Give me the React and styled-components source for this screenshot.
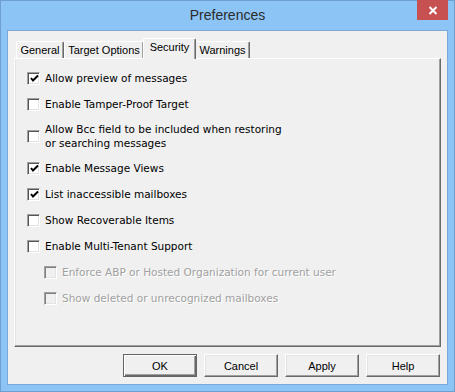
import styled, { createGlobalStyle } from 'styled-components'

const GlobalStyle = createGlobalStyle`
  html, body {
    margin: 0;
    padding: 0;
    background: #8bc4f5;
  }
`

const options = [
  { label: 'Allow preview of messages', checked: true },
  { label: 'Enable Tamper-Proof Target' },
  { label: ['Allow Bcc field to be included when restoring', 'or searching messages'] },
  { label: 'Enable Message Views', checked: true },
  { label: 'List inaccessible mailboxes', checked: true },
  { label: 'Show Recoverable Items' },
  { label: 'Enable Multi-Tenant Support' },
  { label: 'Enforce ABP or Hosted Organization for current user', sub: true, disabled: true },
  { label: 'Show deleted or unrecognized mailboxes', sub: true, disabled: true },
]

const tabs = [
  { name: 'General', width: 48 },
  { name: 'Target Options', width: 80 },
  { name: 'Security', width: 53, active: true },
  { name: 'Warnings', width: 55 },
]

const CheckBox = ({ checked, disabled }) => (
  <Box $disabled={disabled}>
    {checked && (
      <svg width="9" height="9" viewBox="0 0 9 9">
        <path d="M1 4 L3 6.5 L8 1.5" stroke="#000" strokeWidth="2" fill="none" />
      </svg>
    )}
  </Box>
)

const App = () => {
  return (
    <Window>
      <GlobalStyle />
      <TitleBar>
        <Title>Preferences</Title>
        <CloseButton>
          <svg width="10" height="9" viewBox="0 0 10 9">
            <path d="M1.5 1 L8.5 8 M8.5 1 L1.5 8" stroke="#fff" strokeWidth="2" />
          </svg>
        </CloseButton>
      </TitleBar>
      <Client>
        <TabRow>
          {tabs.map((t) => (
            <Tab key={t.name} $active={t.active} $width={t.width}>{t.name}</Tab>
          ))}
        </TabRow>
        <Panel>
          {options.map((o, i) => (
            <Row key={i} $sub={o.sub} $tall={Array.isArray(o.label)}>
              <CheckBox checked={o.checked} disabled={o.disabled} />
              <Label $disabled={o.disabled}>
                {Array.isArray(o.label)
                  ? o.label.map((l) => <div key={l}>{l}</div>)
                  : o.label}
              </Label>
            </Row>
          ))}
        </Panel>
        <ButtonRow>
          <Button $default>OK</Button>
          <Button>Cancel</Button>
          <Button>Apply</Button>
          <Button>Help</Button>
        </ButtonRow>
      </Client>
    </Window>
  )
}

const Window = styled.div`
  width: 455px;
  height: 392px;
  box-sizing: border-box;
  background: #8bc4f5;
  border: 1px solid #6e9fcf;
  padding: 0 6px 6px;
  display: flex;
  flex-direction: column;
`

const TitleBar = styled.div`
  height: 29px;
  display: grid;
  grid-template-columns: 1fr;
  margin: 0 -6px;
`

const Title = styled.div`
  grid-area: 1 / 1;
  justify-self: center;
  align-self: start;
  margin-top: 6px;
  font-family: 'Liberation Sans', Arial, sans-serif;
  font-size: 14px;
  color: #2b2b2b;
`

const CloseButton = styled.div`
  grid-area: 1 / 1;
  justify-self: end;
  align-self: start;
  margin: -1px 6px 0 0;
  width: 31px;
  height: 20px;
  background: #c75050;
  display: flex;
  align-items: center;
  justify-content: center;
`

const Client = styled.div`
  flex: 1;
  background: #f0f0f0;
  border: 1px solid #7ba8d8;
  padding: 8px 6px 7px;
  display: flex;
  flex-direction: column;
`

const TabRow = styled.div`
  height: 20px;
  margin-bottom: -1px;
  padding-left: 2px;
  display: flex;
  align-items: flex-end;
  position: relative;
  z-index: 1;
`

const Tab = styled.div`
  box-sizing: border-box;
  width: ${(p) => p.$width}px;
  height: ${(p) => (p.$active ? '21px' : '17px')};
  margin: ${(p) => (p.$active ? '0 -1px' : '0 0 1px')};
  padding-top: 1px;
  text-align: center;
  background: #f0f0f0;
  border-top: 1px solid #fff;
  border-left: 1px solid #fff;
  border-right: 1px solid #696969;
  box-shadow: inset -1px 0 #a0a0a0;
  border-radius: 2px 2px 0 0;
  font-family: 'Liberation Sans', Arial, sans-serif;
  font-size: 11px;
  line-height: 15px;
  color: #000;
  white-space: nowrap;
  z-index: ${(p) => (p.$active ? 2 : 1)};
`

const Panel = styled.div`
  height: 289px;
  box-sizing: border-box;
  border-top: 1px solid #fff;
  border-left: 1px solid #fff;
  border-right: 1px solid #696969;
  border-bottom: 1px solid #696969;
  box-shadow: inset -1px -1px #a0a0a0, inset 1px 0 #e3e3e3;
  padding: 6px 12px 0;
  display: flex;
  flex-direction: column;
`

const Row = styled.div`
  display: flex;
  align-items: center;
  gap: 5px;
  height: ${(p) => (p.$tall ? '38px' : '26px')};
  padding-left: ${(p) => (p.$sub ? '17px' : '0')};
`

const Box = styled.div`
  width: 13px;
  height: 13px;
  box-sizing: border-box;
  flex-shrink: 0;
  background: ${(p) => (p.$disabled ? '#f0f0f0' : '#fff')};
  border: 1px solid;
  border-color: #a0a0a0 #fff #fff #a0a0a0;
  box-shadow: inset 1px 1px ${(p) => (p.$disabled ? '#808080' : '#555')}, inset -1px -1px #e3e3e3;
  display: flex;
  align-items: center;
  justify-content: center;
  svg {
    margin: 1px 0 0 1px;
  }
`

const Label = styled.div`
  font-family: 'DejaVu Sans', Verdana, sans-serif;
  font-size: 10.5px;
  line-height: 14px;
  color: ${(p) => (p.$disabled ? '#a0a0a0' : '#000')};
  text-shadow: ${(p) => (p.$disabled ? '1px 1px #fff' : 'none')};
  white-space: nowrap;
`

const ButtonRow = styled.div`
  display: flex;
  justify-content: flex-end;
  gap: 7px;
  margin: 7px 1px 0 0;
`

const Button = styled.div`
  width: 74px;
  height: 23px;
  box-sizing: border-box;
  background: #f0f0f0;
  border: 1px solid;
  border-color: ${(p) => (p.$default ? '#646464' : '#fff #696969 #696969 #fff')};
  box-shadow: ${(p) =>
    p.$default
      ? 'inset 1px 1px #fff, inset -1px -1px #696969, inset -2px -2px #a0a0a0'
      : 'inset -1px -1px #a0a0a0, inset 1px 1px #e3e3e3'};
  display: flex;
  align-items: center;
  justify-content: center;
  font-family: 'Liberation Sans', Arial, sans-serif;
  font-size: 11px;
  color: #000;
`

export default App
